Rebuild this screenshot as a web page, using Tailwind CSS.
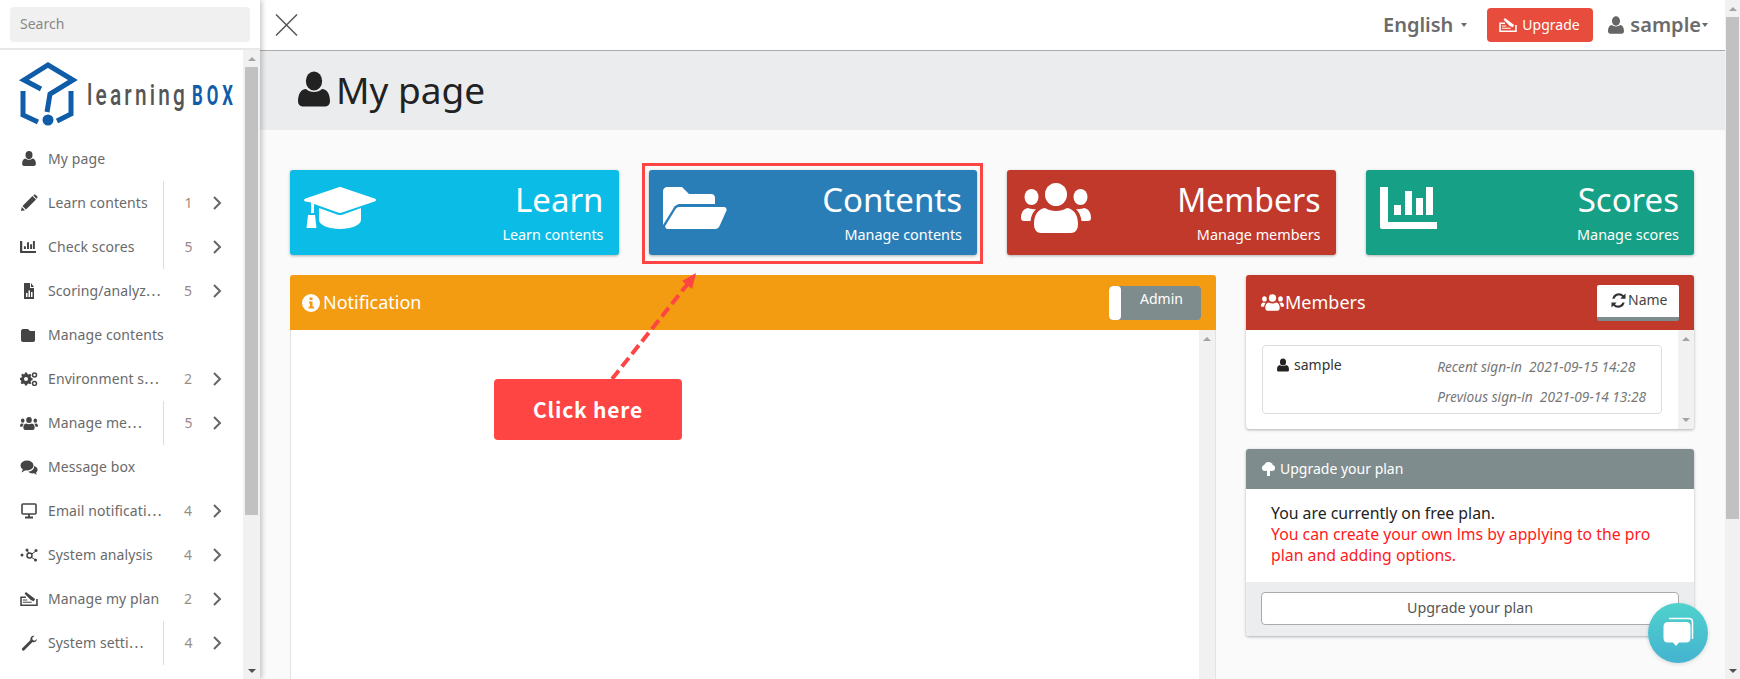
<!DOCTYPE html>
<html lang="en">
<head>
    <meta charset="UTF-8">
    <meta name="viewport" content="width=device-width, initial-scale=1.0">
    <title>My page</title>
    <script src="https://cdn.jsdelivr.net/npm/@tailwindcss/browser@4"></script>
</head>
<body class="relative flex h-screen overflow-hidden bg-[#fafafa] text-sm text-[#222] font-['Noto_Sans','Noto_Sans_CJK_JP',sans-serif]">
    <svg class="hidden">
        <symbol id="i-user" viewBox="0 0 22 24"><ellipse cx="11" cy="6.5" rx="5.6" ry="6.5"/><path d="M0 20.5c0-5 2-8.300 5.500-8.500 1.300 1.300 3.400 2 5.500 2s4.200-.7 5.500-2c3.500.2 5.500 3.500 5.500 8.500 0 2.200-1.400 3.500-3 3.500H3c-1.600 0-3-1.300-3-3.500z"/></symbol>
        <symbol id="i-users" viewBox="0 0 70 50"><ellipse cx="35" cy="11.500" rx="11" ry="11.500"/><ellipse cx="10.500" cy="14" rx="7" ry="8"/><ellipse cx="59.500" cy="14" rx="7" ry="8"/><path d="M7 25c2 1 5 1.500 8 1-3 3-5 7-5.500 12H3c-2 0-3-1-3-3 0-5 2-9 7-10zM63 25c-2 1-5 1.500-8 1 3 3 5 7 5.500 12H67c2 0 3-1 3-3 0-5-2-9-7-10z"/><path d="M24 25c3 2 7 3 11 3s8-1 11-3c7 1 11 7 11 16 0 6-3 9-7 9H20c-4 0-7-3-7-9 0-9 4-15 11-16z"/></symbol>
        <symbol id="i-chart" viewBox="0 0 57 42"><path d="M0 0h8v35h49v7H2c-1 0-2-1-2-2zM14 18h7v10h-7zM25 4h7v24h-7zM36 11h7v17h-7zM46 0h7v28h-7z"/></symbol>
        <symbol id="i-plan" viewBox="0 0 20 16"><path fill-rule="evenodd" d="M0 5h6.500v1.800H1.800v7.400h16.400V8H20v8H0z"/><path d="M5 2 6.500 0 17 8l-1.500 2.500L12 9z"/><path d="M3 8.500h5v1.300H3zM3 11h10v1.300H3z"/></symbol>
        <symbol id="i-refresh" viewBox="0 0 16 16"><path d="M13.500 2.500A7 7 0 0 0 1.500 6h2.300a4.800 4.800 0 0 1 8-2L10 6h5.500V.5zM2.500 13.500A7 7 0 0 0 14.500 10h-2.300a4.800 4.800 0 0 1-8 2L6 10H.5v5.500z"/></symbol>
    </svg>

    <!-- Sidebar -->
    <aside class="relative z-10 flex h-full w-[260px] shrink-0 flex-col bg-white shadow-[2px_0_5px_rgba(0,0,0,0.22)]">
        <div class="h-[50px] shrink-0 border-b-2 border-[#e8e8e8] px-[10px] pt-[7px]">
            <div class="flex h-[35px] w-[240px] items-center rounded bg-[#f0f0f0] pb-[2px] pl-[10px] text-[14px] text-[#888]">Search</div>
        </div>
        <div class="flex min-h-0 flex-1">
            <div class="w-[243px] shrink-0">
                <div class="h-[87px]">
                    <svg width="243" height="87" viewBox="0 50 243 87" class="block overflow-visible">
                        <g fill="none" stroke="#0f5ca8" stroke-width="5">
                            <path d="M41 89 24 80 48 65 73 80 50 94 47 112"/>
                            <path d="M23 91v24l15 7M71 91v23l-14 7"/>
                        </g>
                        <circle cx="48" cy="120" r="5.500" fill="#0f5ca8"/>
                        <text transform="translate(87 105) scale(0.72 1)" textLength="136" lengthAdjust="spacing" font-family="Roboto" font-weight="500" font-size="29" fill="#555">learning</text>
                        <text transform="translate(192 105) scale(0.6 1)" textLength="68" lengthAdjust="spacing" font-family="Roboto" font-weight="700" font-size="28" fill="#0f5ca8">BOX</text>
                    </svg>
                </div>

                <div class="flex h-[44px] items-center text-[14px] tracking-[0.1px] text-[#6a6a6a]">
                    <div class="w-[48px] pl-[20px]"><svg width="18" height="16" class="fill-[#444]"><use href="#i-user" x="2" width="14" height="15"/></svg></div>
                    <div class="w-[115px]">My page</div>
                </div>
                <div class="flex h-[44px] items-center text-[14px] tracking-[0.1px] text-[#6a6a6a]">
                    <div class="w-[48px] pl-[20px]"><svg width="18" height="18" viewBox="0 0 18 18" class="fill-[#444]"><path d="M12.500 2 16 5.500 6 15.500 2.500 12zM13.800.9c.6-.6 1.300-.6 1.900 0l1.400 1.400c.6.6.6 1.300 0 1.900l-.5.5L13.300 1.400zM1.800 13 5 16.200 1 17z"/></svg></div>
                    <div class="w-[115px]">Learn contents</div>
                    <div class="flex h-full w-[50px] items-center justify-center border-l border-[#ddd] text-[#998f80]">1</div>
                    <svg width="9" height="14" viewBox="0 0 9 14" fill="none" stroke="#666" stroke-width="2"><path d="m1 1 6 6-6 6"/></svg>
                </div>
                <div class="flex h-[44px] items-center text-[14px] tracking-[0.1px] text-[#6a6a6a]">
                    <div class="w-[48px] pl-[20px]"><svg width="16" height="12" class="fill-[#444]"><use href="#i-chart" width="16" height="12"/></svg></div>
                    <div class="w-[115px]">Check scores</div>
                    <div class="flex h-full w-[50px] items-center justify-center border-l border-[#ddd] text-[#988]">5</div>
                    <svg width="9" height="14" viewBox="0 0 9 14" fill="none" stroke="#666" stroke-width="2"><path d="m1 1 6 6-6 6"/></svg>
                </div>
                <div class="flex h-[44px] items-center text-[14px] tracking-[0.1px] text-[#6a6a6a]">
                    <div class="w-[48px] pl-[20px]"><svg width="18" height="16" viewBox="0 0 18 16" class="fill-[#444]" fill-rule="evenodd"><path d="M4 0h6v5h4v11H4zM11 0l3 4h-3zM6 10v4h1.500v-4zM8.500 7.500V14H10V7.500zM11 9v5h1.500V9z"/></svg></div>
                    <div class="w-[115px] whitespace-nowrap">Scoring/analyz⋯</div>
                    <div class="flex h-full w-[50px] items-center justify-center text-[#988]">5</div>
                    <svg width="9" height="14" viewBox="0 0 9 14" fill="none" stroke="#666" stroke-width="2"><path d="m1 1 6 6-6 6"/></svg>
                </div>
                <div class="flex h-[44px] items-center text-[14px] tracking-[0.1px] text-[#6a6a6a]">
                    <div class="w-[48px] pl-[20px]"><svg width="18" height="14" viewBox="0 0 18 14" class="fill-[#444]"><path d="M3 1h5l2 2h5v9c0 1-.5 2-2 2H3c-1 0-2-1-2-2V3c0-1 1-2 2-2z"/></svg></div>
                    <div class="w-[115px] whitespace-nowrap">Manage contents</div>
                </div>
                <div class="flex h-[44px] items-center text-[14px] tracking-[0.1px] text-[#6a6a6a]">
                    <div class="w-[48px] pl-[20px]"><svg width="18" height="14" viewBox="0 0 18 14" class="fill-[#444]"><path fill-rule="evenodd" d="M5 2h2l.4 1.500 1.400.6L10 3.300l1.400 1.400-.8 1.300.5 1.300 1.500.4v2l-1.500.4-.5 1.300.8 1.300L10 13.800l-1.200-.8-1.400.6L7 15H5l-.4-1.400-1.400-.6-1.200.8L.6 12.400l.8-1.300-.5-1.300L0 9.500v-2l1.500-.4.5-1.300-.8-1.300L2.600 3.100 3.800 3.900l.8-.4zM6 6.500a2 2 0 1 0 0 4 2 2 0 0 0 0-4z" transform="translate(0 -1.500)"/><circle cx="14.500" cy="3" r="2" fill="none" stroke="#444" stroke-width="1.500"/><circle cx="14.500" cy="11.500" r="2" fill="none" stroke="#444" stroke-width="1.500"/></svg></div>
                    <div class="w-[115px] whitespace-nowrap">Environment s⋯</div>
                    <div class="flex h-full w-[50px] items-center justify-center text-[#998f80]">2</div>
                    <svg width="9" height="14" viewBox="0 0 9 14" fill="none" stroke="#666" stroke-width="2"><path d="m1 1 6 6-6 6"/></svg>
                </div>
                <div class="flex h-[44px] items-center text-[14px] tracking-[0.1px] text-[#6a6a6a]">
                    <div class="w-[48px] pl-[20px]"><svg width="18" height="13" class="fill-[#444]"><use href="#i-users" width="18" height="13"/></svg></div>
                    <div class="w-[115px]">Manage me⋯</div>
                    <div class="flex h-full w-[50px] items-center justify-center border-l border-[#ddd] text-[#988]">5</div>
                    <svg width="9" height="14" viewBox="0 0 9 14" fill="none" stroke="#666" stroke-width="2"><path d="m1 1 6 6-6 6"/></svg>
                </div>
                <div class="flex h-[44px] items-center text-[14px] tracking-[0.1px] text-[#6a6a6a]">
                    <div class="w-[48px] pl-[20px]"><svg width="18" height="15" viewBox="0 0 18 15" class="fill-[#444]"><ellipse cx="7" cy="5.500" rx="6.500" ry="5"/><path d="M3 9 1.500 12.500 6 10z"/><path d="M14 6c2.500.8 4 2.500 3.500 4.500-.2 1-.8 1.800-1.500 2.300l.8 2-2.800-1.500c-2.300.4-4.700-.3-5.800-1.800C11 11.500 14.800 9.500 14 6z"/></svg></div>
                    <div class="w-[115px]">Message box</div>
                </div>
                <div class="flex h-[44px] items-center text-[14px] tracking-[0.1px] text-[#6a6a6a]">
                    <div class="w-[48px] pl-[20px]"><svg width="18" height="16" viewBox="0 0 18 16" fill="none" stroke="#444"><rect x="2" y="1" width="14" height="10" rx="1" stroke-width="1.600"/><path d="M9 11v3M5 14.500h8" stroke-width="1.800"/></svg></div>
                    <div class="w-[115px] whitespace-nowrap">Email notificati⋯</div>
                    <div class="flex h-full w-[50px] items-center justify-center text-[#998f80]">4</div>
                    <svg width="9" height="14" viewBox="0 0 9 14" fill="none" stroke="#666" stroke-width="2"><path d="m1 1 6 6-6 6"/></svg>
                </div>
                <div class="flex h-[44px] items-center text-[14px] tracking-[0.1px] text-[#6a6a6a]">
                    <div class="w-[48px] pl-[20px]"><svg width="18" height="14" viewBox="0 0 18 14" class="fill-[#444]"><circle cx="2" cy="7" r="1.500"/><circle cx="7" cy="2" r="1.500"/><circle cx="16" cy="2.500" r="1.500"/><circle cx="15.500" cy="12" r="1.500"/><circle cx="9.500" cy="7.500" r="2.500" fill="none" stroke="#444" stroke-width="1.500"/><path d="M7 2l2 4M16 3l-5 3.500M15.500 12 11 9" stroke="#444" stroke-width="1" fill="none"/></svg></div>
                    <div class="w-[115px]">System analysis</div>
                    <div class="flex h-full w-[50px] items-center justify-center text-[#998f80]">4</div>
                    <svg width="9" height="14" viewBox="0 0 9 14" fill="none" stroke="#666" stroke-width="2"><path d="m1 1 6 6-6 6"/></svg>
                </div>
                <div class="flex h-[44px] items-center text-[14px] tracking-[0.1px] text-[#6a6a6a]">
                    <div class="w-[48px] pl-[20px]"><svg width="18" height="14" class="fill-[#444]"><use href="#i-plan" width="18" height="14"/></svg></div>
                    <div class="w-[115px]">Manage my plan</div>
                    <div class="flex h-full w-[50px] items-center justify-center text-[#998f80]">2</div>
                    <svg width="9" height="14" viewBox="0 0 9 14" fill="none" stroke="#666" stroke-width="2"><path d="m1 1 6 6-6 6"/></svg>
                </div>
                <div class="flex h-[44px] items-center text-[14px] tracking-[0.1px] text-[#6a6a6a]">
                    <div class="w-[48px] pl-[20px]"><svg width="18" height="16" viewBox="0 0 18 16" class="fill-[#444]"><path d="M10.500 5 2 13.500a1.500 1.500 0 0 0 2 2L12.500 7c2 .8 4-.3 4.500-3l-2.300 1.800L12.700 5l-.5-2L14.500.8C12 .3 9.800 2.500 10.500 5z"/></svg></div>
                    <div class="w-[115px]">System setti⋯</div>
                    <div class="flex h-full w-[50px] items-center justify-center border-l border-[#ddd] text-[#998f80]">4</div>
                    <svg width="9" height="14" viewBox="0 0 9 14" fill="none" stroke="#666" stroke-width="2"><path d="m1 1 6 6-6 6"/></svg>
                </div>
            </div>

            <!-- sidebar scrollbar -->
            <div class="flex w-[17px] flex-col bg-[#f1f1f1] px-[2px]">
                <div class="flex h-[17px] items-center justify-center"><div class="h-0 w-0 border-x-[4px] border-b-[4px] border-x-transparent border-b-[#a3a3a3]"></div></div>
                <div class="h-[448px] bg-[#c1c1c1]"></div>
                <div class="flex-1"></div>
                <div class="flex h-[17px] items-center justify-center"><div class="h-0 w-0 border-x-[4px] border-t-[4px] border-x-transparent border-t-[#505050]"></div></div>
            </div>
        </div>
    </aside>

    <!-- Main -->
    <div class="flex h-full min-w-0 flex-1 flex-col">
        <header class="flex h-[51px] shrink-0 items-center border-b border-[#aaa] bg-white shadow-[0_1px_2px_rgba(0,0,0,0.15)]">
            <svg width="24" height="24" viewBox="0 0 24 24" class="ml-[14px]" fill="none" stroke="#555" stroke-width="1.500"><path d="m2 1.500 21 21M23 1.500l-21 21"/></svg>
            <div class="ml-auto flex items-center">
                <span class="text-[20px] font-semibold text-[#6b6b6b]">English</span>
                <span class="ml-[8px] h-0 w-0 border-x-[3.500px] border-t-[4px] border-x-transparent border-t-[#6b6b6b]"></span>
                <div class="ml-[20px] flex h-[34px] w-[106px] items-center rounded bg-[#e74c3c] pl-[12px] text-[14px] text-white">
                    <svg width="18" height="14" class="fill-white"><use href="#i-plan" width="18" height="14"/></svg>
                    <span class="ml-[5px]">Upgrade</span>
                </div>
                <svg width="16" height="18" class="ml-[15px] fill-[#666]"><use href="#i-user" width="16" height="18"/></svg>
                <span class="ml-[6px] text-[20px] font-semibold text-[#6b6b6b]">sample</span>
                <span class="ml-[1px] mr-[17px] h-0 w-0 border-x-[3.500px] border-t-[4px] border-x-transparent border-t-[#6b6b6b]"></span>
            </div>
        </header>

        <div class="flex h-[79px] shrink-0 items-center bg-[#ebecee] pb-[3px] pl-[38px]">
            <svg width="32" height="36" class="fill-[#222]"><use href="#i-user" width="32" height="36"/></svg>
            <h1 class="ml-[6px] text-[37px] leading-none">My page</h1>
        </div>

        <main class="min-h-0 flex-1 overflow-hidden pl-[30px] pr-[31px] pt-[40px]">
            <div class="grid grid-cols-4 gap-[30px]">
                <div class="flex h-[85px] items-start justify-between rounded-[3px] bg-[#0bbde6] pl-[14px] pr-[15px] text-white shadow-[0_1px_3px_rgba(0,0,0,0.3)]">
                    <svg width="72" height="42" viewBox="0 0 72 42" class="mt-[17px] fill-white"><path d="M34 .5c1.500-.6 2.500-.6 4 0l32.500 11c2 .8 2 2.200 0 3L38 25.500c-1.500.6-2.500.6-4 0L10 17v9h-3V15.500l-5.500-1c-2-.8-2-2.200 0-3z"/><path d="M15 21l18 6.500c2 .7 4 .7 6 0L57 21v12c0 5-10 9-21 9s-21-4-21-9zM4 28h7l1.500 13H2.500z"/></svg>
                    <div class="text-right"><div class="mt-[8px] text-[33px] leading-[44px]">Learn</div><div class="mt-[4px] text-[14.4px] leading-[18px]">Learn contents</div></div>
                </div>
                <div class="flex h-[85px] items-start justify-between rounded-[3px] bg-[#2a7eb8] pl-[14px] pr-[15px] text-white shadow-[0_1px_3px_rgba(0,0,0,0.3)]">
                    <svg width="64" height="42" viewBox="0 0 64 42" class="mt-[17px] fill-white"><path d="M0 4c0-2 2-4 4-4h15l7 7h22c3 0 4 2 4 4v6H18c-4 0-7 2-8 5L0 38z"/><path d="M16 20h45c2 0 3 2 2.500 3.500L57 38c-1 2.500-2.500 4-5 4H5c-2 0-3.500-2-2.500-3.500L12 23c1-2 2.500-3 4-3z"/></svg>
                    <div class="text-right"><div class="mt-[8px] text-[33px] leading-[44px]">Contents</div><div class="mt-[4px] text-[14.4px] leading-[18px]">Manage contents</div></div>
                </div>
                <div class="flex h-[85px] items-start justify-between rounded-[3px] bg-[#c0392b] pl-[14px] pr-[15px] text-white shadow-[0_1px_3px_rgba(0,0,0,0.3)]">
                    <svg width="70" height="50" class="mt-[13px] fill-white"><use href="#i-users" width="70" height="50"/></svg>
                    <div class="text-right"><div class="mt-[8px] text-[32px] leading-[44px]">Members</div><div class="mt-[4px] text-[14.4px] leading-[18px]">Manage members</div></div>
                </div>
                <div class="flex h-[85px] items-start justify-between rounded-[3px] bg-[#16a085] pl-[14px] pr-[15px] text-white shadow-[0_1px_3px_rgba(0,0,0,0.3)]">
                    <svg width="57" height="42" class="mt-[17px] fill-white"><use href="#i-chart" width="57" height="42"/></svg>
                    <div class="text-right"><div class="mt-[8px] text-[33px] leading-[44px]">Scores</div><div class="mt-[4px] text-[14.4px] leading-[18px]">Manage scores</div></div>
                </div>
            </div>

            <div class="mt-[20px] flex items-start gap-[30px]">
                <!-- Notification -->
                <section class="h-[500px] w-[926px] shrink-0 overflow-hidden rounded-t-[3px] bg-white">
                    <div class="flex h-[55px] items-center bg-[#f39c12] pl-[12px] pr-[15px] text-white">
                        <svg width="18" height="18" viewBox="0 0 18 18"><circle cx="9" cy="9" r="9" fill="#fff"/><path d="M7.500 3.500h3v2.500h-3zM7 7.500h3.500v5H12V14.500H6.500V12.500H8V9.500H7z" fill="#f39c12"/></svg>
                        <span class="ml-[3px] text-[18px]">Notification</span>
                        <div class="ml-auto flex h-[34px] w-[92px] overflow-hidden rounded bg-[#7f8c8d]">
                            <div class="w-[12px] rounded bg-white"></div>
                            <div class="flex-1 pl-[19px] pt-[3px] text-[14px]">Admin</div>
                        </div>
                    </div>
                    <div class="flex h-[445px] justify-end border-x border-[#e3e3e3]">
                        <div class="flex w-[16px] justify-center bg-[#f1f1f1] pt-[7px]"><div class="h-0 w-0 border-x-[4px] border-b-[4px] border-x-transparent border-b-[#a3a3a3]"></div></div>
                    </div>
                </section>

                <div class="flex min-w-0 flex-1 flex-col gap-[20px]">
                    <!-- Members -->
                    <section class="h-[154px] overflow-hidden rounded-[3px] bg-white shadow-[0_1px_3px_rgba(0,0,0,0.3)]">
                        <div class="flex h-[55px] items-center bg-[#c0392b] pl-[15px] pr-[15px] text-white">
                            <svg width="23" height="17" class="fill-white"><use href="#i-users" width="23" height="17"/></svg>
                            <span class="ml-[1px] text-[18px]">Members</span>
                            <div class="ml-auto flex h-[36px] w-[82px] items-start rounded-[2px] border-b-[4px] border-[#7f8c8d] bg-white pl-[14px] pt-[5px] text-[14px] text-[#444]">
                                <svg width="15" height="15" class="mt-[3px] fill-[#333]"><use href="#i-refresh" width="15" height="15"/></svg>
                                <span class="ml-[2px]">Name</span>
                            </div>
                        </div>
                        <div class="flex h-[99px]">
                            <div class="min-w-0 flex-1 pl-[16px] pr-[16px] pt-[15px]">
                                <div class="flex h-[69px] rounded border border-[#ddd] pl-[14px] pr-[15px]">
                                    <div class="flex h-[38px] items-center text-[14px] text-[#333]">
                                        <svg width="12" height="14" class="fill-[#222]"><use href="#i-user" width="12" height="14"/></svg>
                                        <span class="ml-[5px]">sample</span>
                                    </div>
                                    <div class="ml-auto mt-[6px] text-[13.7px] italic leading-[30px] text-[#777]">
                                        <div class="whitespace-pre">Recent sign-in  2021-09-15 14:28</div>
                                        <div class="whitespace-pre">Previous sign-in  2021-09-14 13:28</div>
                                    </div>
                                </div>
                            </div>
                            <div class="flex w-[16px] flex-col items-center justify-between bg-[#f1f1f1] py-[7px]">
                                <div class="h-0 w-0 border-x-[4px] border-b-[4px] border-x-transparent border-b-[#a3a3a3]"></div>
                                <div class="h-0 w-0 border-x-[4px] border-t-[4px] border-x-transparent border-t-[#a3a3a3]"></div>
                            </div>
                        </div>
                    </section>

                    <!-- Upgrade -->
                    <section class="h-[187px] overflow-hidden rounded-[3px] bg-white shadow-[0_1px_3px_rgba(0,0,0,0.3)]">
                        <div class="flex h-[40px] items-center bg-[#7f8c8d] pb-[1px] pl-[16px] text-[14px] text-white">
                            <svg width="13" height="14" viewBox="0 0 13 14" class="fill-white"><circle cx="6.500" cy="4.500" r="4.500"/><circle cx="3" cy="6" r="3"/><circle cx="10" cy="6" r="3"/><path d="M5 8h3v6H5z"/></svg>
                            <span class="ml-[5px]">Upgrade your plan</span>
                        </div>
                        <div class="h-[93px] pl-[25px] pr-[30px] pt-[14px] text-[15.8px] leading-[21px]">
                            <div>You are currently on free plan.</div>
                            <div class="text-[#ff1a1a]">You can create your own lms by applying to the pro plan and adding options.</div>
                        </div>
                        <div class="h-[54px] bg-[#ebedee] px-[15px] pt-[10px]">
                            <div class="flex h-[33px] items-center justify-center rounded border border-[#aaa] bg-white text-[14.3px] text-[#555]">Upgrade your plan</div>
                        </div>
                    </section>
                </div>
            </div>
        </main>
    </div>

    <!-- page scrollbar -->
    <div class="flex h-full w-[15px] shrink-0 flex-col bg-[#f1f1f1] px-[1px]">
        <div class="flex h-[17px] items-center justify-center"><div class="h-0 w-0 border-x-[4px] border-b-[4px] border-x-transparent border-b-[#a3a3a3]"></div></div>
        <div class="h-[502px] bg-[#c1c1c1]"></div>
        <div class="flex-1"></div>
        <div class="flex h-[17px] items-center justify-center"><div class="h-0 w-0 border-x-[4px] border-t-[4px] border-x-transparent border-t-[#505050]"></div></div>
    </div>

    <!-- annotation over the page -->
    <div class="absolute left-[642px] top-[163px] z-20 h-[101px] w-[341px] border-[3px] border-[#ff4444]"></div>
    <svg class="pointer-events-none absolute left-0 top-0 z-20" width="1740" height="679" fill="none">
        <path d="M612 379 690 281" stroke="#ff4444" stroke-width="4" stroke-dasharray="11 5"/>
        <path d="M696 273 692 289 682 281z" fill="#ff4444"/>
    </svg>
    <div class="absolute left-[494px] top-[379px] z-20 flex h-[61px] w-[188px] items-center justify-center rounded bg-[#ff4444] pb-[1px] text-[21px] font-bold tracking-[0.8px] text-white font-['Noto_Sans_CJK_JP',sans-serif]">Click here</div>

    <!-- chat bubble -->
    <div class="absolute left-[1648px] top-[603px] z-20 flex h-[60px] w-[60px] items-center justify-center rounded-full bg-gradient-to-b from-[#4fd1cc] to-[#45b3d0] shadow-[0_1px_4px_rgba(0,0,0,0.15)]">
        <svg width="34" height="34" viewBox="0 0 34 34">
            <path d="M8 2.500h20c2 0 3.500 1.500 3.500 3.500v17" fill="none" stroke="#fff" stroke-width="1.500"/>
            <path d="M7 6h18c3 0 4.500 1.500 4.500 4.500V22c0 3-1.500 4.500-4.500 4.500h-7L15 30l-3-3.500H7c-3 0-4.500-1.500-4.500-4.500V10.500C2.500 7.500 4 6 7 6z" fill="#fff"/>
        </svg>
    </div>
</body>
</html>
